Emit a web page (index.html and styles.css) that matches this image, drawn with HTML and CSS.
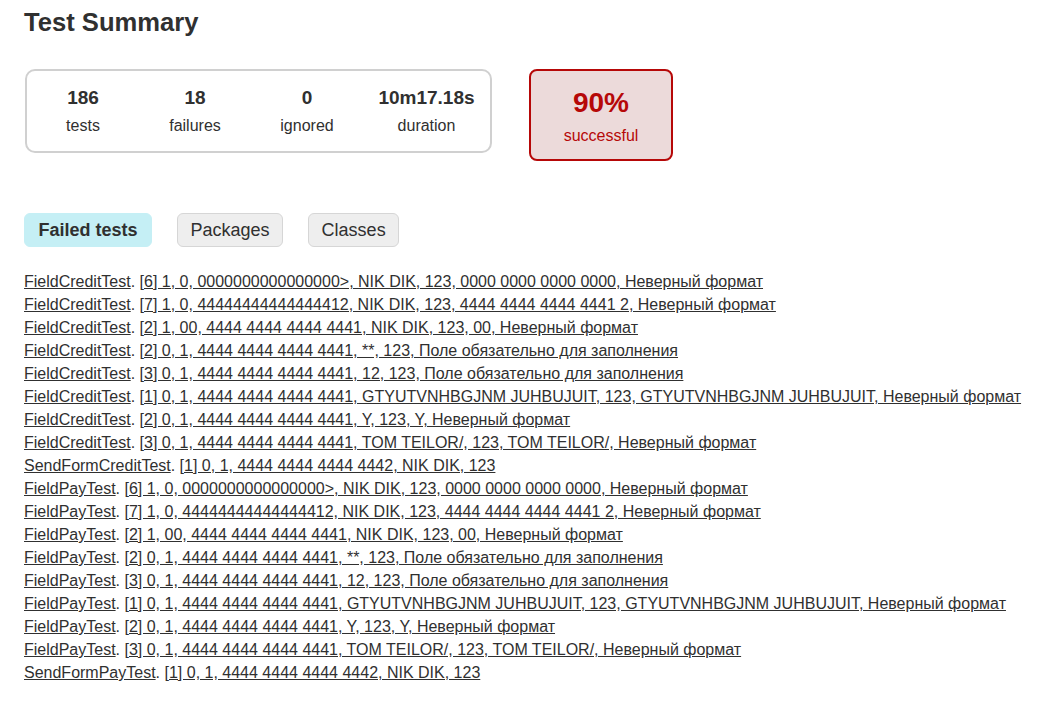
FILE: index.html
```
<!DOCTYPE html>
<html>
<head>
<meta charset="utf-8">
<title>Test results - Test Summary</title>
<link rel="stylesheet" href="styles.css">
</head>
<body>
<div class="content">
  <h1 class="title">Test Summary</h1>
  <div class="summary">
    <div class="summary-group">
      <div class="info-box"><div class="counter">186</div><div class="label">tests</div></div>
      <div class="info-box"><div class="counter">18</div><div class="label">failures</div></div>
      <div class="info-box"><div class="counter">0</div><div class="label">ignored</div></div>
      <div class="info-box wide"><div class="counter">10m17.18s</div><div class="label">duration</div></div>
    </div>
    <div class="success-rate">
      <div class="percent">90%</div>
      <div class="label">successful</div>
    </div>
  </div>
  <div class="tabs">
    <span class="tab selected">Failed tests</span>
    <span class="tab">Packages</span>
    <span class="tab">Classes</span>
  </div>
  <ul class="failed-list">
    <li><a href="#">FieldCreditTest</a>. <a href="#">[6] 1, 0, 0000000000000000&gt;, NIK DIK, 123, 0000 0000 0000 0000, Неверный формат</a></li>
    <li><a href="#">FieldCreditTest</a>. <a href="#">[7] 1, 0, 44444444444444412, NIK DIK, 123, 4444 4444 4444 4441 2, Неверный формат</a></li>
    <li><a href="#">FieldCreditTest</a>. <a href="#">[2] 1, 00, 4444 4444 4444 4441, NIK DIK, 123, 00, Неверный формат</a></li>
    <li><a href="#">FieldCreditTest</a>. <a href="#">[2] 0, 1, 4444 4444 4444 4441, **, 123, Поле обязательно для заполнения</a></li>
    <li><a href="#">FieldCreditTest</a>. <a href="#">[3] 0, 1, 4444 4444 4444 4441, 12, 123, Поле обязательно для заполнения</a></li>
    <li><a href="#">FieldCreditTest</a>. <a href="#">[1] 0, 1, 4444 4444 4444 4441, GTYUTVNHBGJNM JUHBUJUIT, 123, GTYUTVNHBGJNM JUHBUJUIT, Неверный формат</a></li>
    <li><a href="#">FieldCreditTest</a>. <a href="#">[2] 0, 1, 4444 4444 4444 4441, Y, 123, Y, Неверный формат</a></li>
    <li><a href="#">FieldCreditTest</a>. <a href="#">[3] 0, 1, 4444 4444 4444 4441, TOM TEILOR/, 123, TOM TEILOR/, Неверный формат</a></li>
    <li><a href="#">SendFormCreditTest</a>. <a href="#">[1] 0, 1, 4444 4444 4444 4442, NIK DIK, 123</a></li>
    <li><a href="#">FieldPayTest</a>. <a href="#">[6] 1, 0, 0000000000000000&gt;, NIK DIK, 123, 0000 0000 0000 0000, Неверный формат</a></li>
    <li><a href="#">FieldPayTest</a>. <a href="#">[7] 1, 0, 44444444444444412, NIK DIK, 123, 4444 4444 4444 4441 2, Неверный формат</a></li>
    <li><a href="#">FieldPayTest</a>. <a href="#">[2] 1, 00, 4444 4444 4444 4441, NIK DIK, 123, 00, Неверный формат</a></li>
    <li><a href="#">FieldPayTest</a>. <a href="#">[2] 0, 1, 4444 4444 4444 4441, **, 123, Поле обязательно для заполнения</a></li>
    <li><a href="#">FieldPayTest</a>. <a href="#">[3] 0, 1, 4444 4444 4444 4441, 12, 123, Поле обязательно для заполнения</a></li>
    <li><a href="#">FieldPayTest</a>. <a href="#">[1] 0, 1, 4444 4444 4444 4441, GTYUTVNHBGJNM JUHBUJUIT, 123, GTYUTVNHBGJNM JUHBUJUIT, Неверный формат</a></li>
    <li><a href="#">FieldPayTest</a>. <a href="#">[2] 0, 1, 4444 4444 4444 4441, Y, 123, Y, Неверный формат</a></li>
    <li><a href="#">FieldPayTest</a>. <a href="#">[3] 0, 1, 4444 4444 4444 4441, TOM TEILOR/, 123, TOM TEILOR/, Неверный формат</a></li>
    <li><a href="#">SendFormPayTest</a>. <a href="#">[1] 0, 1, 4444 4444 4444 4442, NIK DIK, 123</a></li>
  </ul>
</div>
</body>
</html>
```
FILE: styles.css
```
html, body {
  margin: 0;
  padding: 0;
  background: #ffffff;
}
body {
  font-family: "Liberation Sans", Arial, sans-serif;
  font-size: 16px;
  color: #303030;
}
a, a:visited {
  color: #303030;
  text-decoration: underline;
}
.content {
  padding: 7px 24px 20px 24px;
}
.title {
  margin: 0;
  font-size: 25.6px;
  line-height: 31px;
  font-weight: bold;
}
.summary {
  margin-top: 31px;
  margin-left: 1px;
  display: flex;
  align-items: flex-start;
  gap: 37px;
}
.summary-group {
  display: flex;
  border: 2px solid #d0d0d0;
  border-radius: 10px;
  padding: 16px 0 16px 0;
}
.info-box {
  width: 112px;
  text-align: center;
}
.info-box.wide {
  width: 127px;
}
.counter {
  font-size: 19px;
  line-height: 22px;
  font-weight: bold;
  margin-bottom: 8px;
}
.label {
  line-height: 18px;
}
.success-rate {
  width: 140px;
  border: 2px solid #b60808;
  border-radius: 8px;
  background: #ecdada;
  color: #b60808;
  text-align: center;
  padding: 16px 0 14px 0;
}
.percent {
  font-size: 28px;
  line-height: 32px;
  font-weight: bold;
  margin-bottom: 8px;
}
.tabs {
  margin-top: 52px;
  display: flex;
  gap: 25px;
}
.tab {
  font-size: 18px;
  line-height: 21px;
  padding: 6px 12.5px 5px 12.5px;
  border: 1px solid #d6d6d6;
  border-radius: 6px;
  background: #eeeeee;
}
.tab.selected {
  font-weight: bold;
  padding: 6px 13.5px 5px 13.5px;
  background: #c5eff5;
  border-color: #c5eff5;
}
.failed-list {
  list-style: none;
  margin: 23px 0 0 0;
  padding: 0;
}
.failed-list li {
  line-height: 23px;
  white-space: nowrap;
}
```
